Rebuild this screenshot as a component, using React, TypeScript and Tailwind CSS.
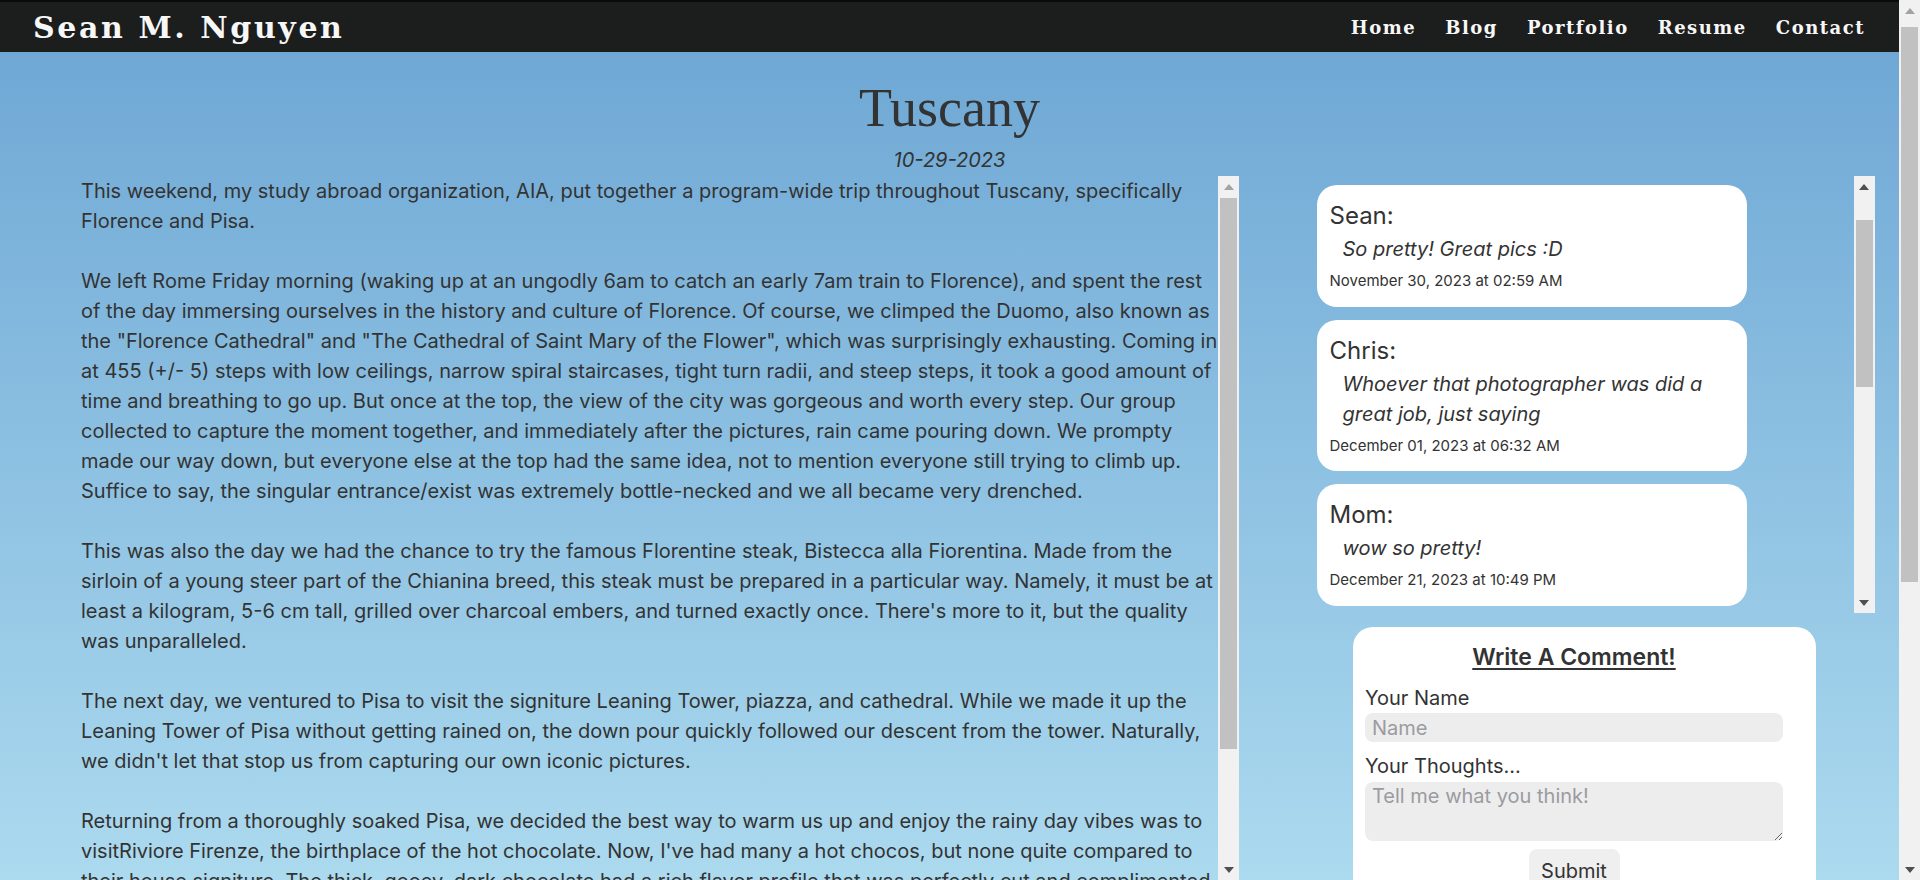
const paragraphs: string[][] = [
  [
    "This weekend, my study abroad organization, AIA, put together a program-wide trip throughout Tuscany, specifically",
    "Florence and Pisa.",
  ],
  [
    "We left Rome Friday morning (waking up at an ungodly 6am to catch an early 7am train to Florence), and spent the rest",
    "of the day immersing ourselves in the history and culture of Florence. Of course, we climped the Duomo, also known as",
    'the "Florence Cathedral" and "The Cathedral of Saint Mary of the Flower", which was surprisingly exhausting. Coming in',
    "at 455 (+/- 5) steps with low ceilings, narrow spiral staircases, tight turn radii, and steep steps, it took a good amount of",
    "time and breathing to go up. But once at the top, the view of the city was gorgeous and worth every step. Our group",
    "collected to capture the moment together, and immediately after the pictures, rain came pouring down. We prompty",
    "made our way down, but everyone else at the top had the same idea, not to mention everyone still trying to climb up.",
    "Suffice to say, the singular entrance/exist was extremely bottle-necked and we all became very drenched.",
  ],
  [
    "This was also the day we had the chance to try the famous Florentine steak, Bistecca alla Fiorentina. Made from the",
    "sirloin of a young steer part of the Chianina breed, this steak must be prepared in a particular way. Namely, it must be at",
    "least a kilogram, 5-6 cm tall, grilled over charcoal embers, and turned exactly once. There's more to it, but the quality",
    "was unparalleled.",
  ],
  [
    "The next day, we ventured to Pisa to visit the signiture Leaning Tower, piazza, and cathedral. While we made it up the",
    "Leaning Tower of Pisa without getting rained on, the down pour quickly followed our descent from the tower. Naturally,",
    "we didn't let that stop us from capturing our own iconic pictures.",
  ],
  [
    "Returning from a thoroughly soaked Pisa, we decided the best way to warm us up and enjoy the rainy day vibes was to",
    "visitRiviore Firenze, the birthplace of the hot chocolate. Now, I've had many a hot chocos, but none quite compared to",
    "their house signiture. The thick, gooey, dark chocolate had a rich flavor profile that was perfectly cut and complimented",
    "by the fresh whipped cream on top.",
  ],
];

const comments = [
  { name: "Sean", text: "So pretty! Great pics :D", date: "November 30, 2023 at 02:59 AM" },
  {
    name: "Chris",
    text: "Whoever that photographer was did a great job, just saying",
    date: "December 01, 2023 at 06:32 AM",
  },
  { name: "Mom", text: "wow so pretty!", date: "December 21, 2023 at 10:49 PM" },
];

function Arrow({ down, muted }: { down?: boolean; muted?: boolean }) {
  return (
    <div className="flex h-[21px] items-center justify-center">
      <svg width="10" height="6" viewBox="0 0 10 6">
        <polygon
          points={down ? "0,0 10,0 5,6" : "0,6 10,6 5,0"}
          fill={muted ? "#a3a3a3" : "#505050"}
        />
      </svg>
    </div>
  );
}

function Scrollbar({ thumb, upMuted }: { thumb: string; upMuted?: boolean }) {
  return (
    <div className="flex w-[21px] shrink-0 flex-col bg-[#f1f1f1]">
      <Arrow muted={upMuted} />
      <div className="flex-1 px-[2px]">
        <div className={"bg-[#c1c1c1] " + thumb} />
      </div>
      <Arrow down />
    </div>
  );
}

export default function App() {
  return (
    <div className="flex h-[880px] w-[1920px] overflow-hidden font-['Inter',sans-serif] text-[#333]">
      <div className="flex w-[1899px] flex-col">
        <header className="flex h-[52px] shrink-0 items-center justify-between border-t-2 border-[#0a0a0a] bg-[#1c1d1d] pl-[33px] pr-[34px] font-['DejaVu_Serif',serif] font-bold text-[#f7f7f7]">
          <div className="text-[30px] tracking-[2.6px]">Sean M. Nguyen</div>
          <nav className="flex gap-[29px] text-[18px] tracking-[1.5px]">
            <span>Home</span>
            <span>Blog</span>
            <span>Portfolio</span>
            <span>Resume</span>
            <span>Contact</span>
          </nav>
        </header>

        <main className="flex flex-1 flex-col bg-[linear-gradient(180deg,#6fa8d5,#aedcf0)]">
          <h1 className="mt-[26px] text-center font-['Liberation_Serif',serif] text-[54px] leading-[60px]">
            Tuscany
          </h1>
          <div className="mt-[10px] text-center text-[20px] italic leading-[24px]">10-29-2023</div>

          <div className="mt-[4px] flex flex-1 pl-[81px]">
            <div className="flex h-[704px] w-[1158px]">
              <div className="flex-1 overflow-hidden text-[20px] leading-[30px]">
                {paragraphs.map((p, i) => (
                  <div key={i} className="mb-[30px]">
                    {p.map((line, j) => (
                      <div key={j} className="whitespace-nowrap">
                        {line}
                      </div>
                    ))}
                  </div>
                ))}
              </div>
              <Scrollbar thumb="mt-[1px] h-[551px]" upMuted />
            </div>

            <div className="ml-[31px] flex flex-1 flex-col items-center">
              <div className="flex h-[437px] w-[580px]">
                <div className="flex-1 overflow-hidden pl-[22px] pt-[9px]">
                  {comments.map((c) => (
                    <div
                      key={c.name}
                      className="mb-[13px] w-[430px] rounded-[20px] bg-white pb-[14px] pl-[13px] pr-[13px] pt-[16px]"
                    >
                      <div className="text-[24px] leading-[29px]">{c.name}:</div>
                      <div className="mt-[4px] pl-[13px] text-[20px] italic leading-[30px]">{c.text}</div>
                      <div className="mt-[6px] text-[15px] leading-[22.5px]">{c.date}</div>
                    </div>
                  ))}
                </div>
                <Scrollbar thumb="mt-[23px] h-[167px]" />
              </div>

              <div className="mt-[14px] w-[463px] rounded-t-[20px] bg-white pb-[20px] pl-[12px] pr-[33px] pt-[16px]">
                <div className="text-center text-[23px] font-semibold leading-[28px] underline decoration-2 underline-offset-[3px]">
                  Write A Comment!
                </div>
                <div className="mt-[15px] text-[20px] leading-[24px]">Your Name</div>
                <input
                  placeholder="Name"
                  className="mt-[3px] block h-[29px] w-full rounded-[8px] bg-[#ededed] px-[7px] text-[20px] outline-none placeholder:text-[#9b9ba1]"
                />
                <div className="mt-[12px] text-[20px] leading-[24px]">Your Thoughts...</div>
                <textarea
                  placeholder="Tell me what you think!"
                  className="mt-[4px] block h-[59px] w-full rounded-[8px] bg-[#ededed] px-[7px] py-[2px] text-[20px] leading-[24px] outline-none placeholder:text-[#9b9ba1]"
                />
                <div className="mt-[8px] flex justify-center">
                  <button className="w-[91px] rounded-[8px] bg-[#efefef] pb-[9px] pt-[10px] text-[20px] leading-[24px]">
                    Submit
                  </button>
                </div>
              </div>
            </div>
          </div>
        </main>
      </div>
      <Scrollbar thumb="mt-[6px] h-[555px]" upMuted />
    </div>
  );
}
